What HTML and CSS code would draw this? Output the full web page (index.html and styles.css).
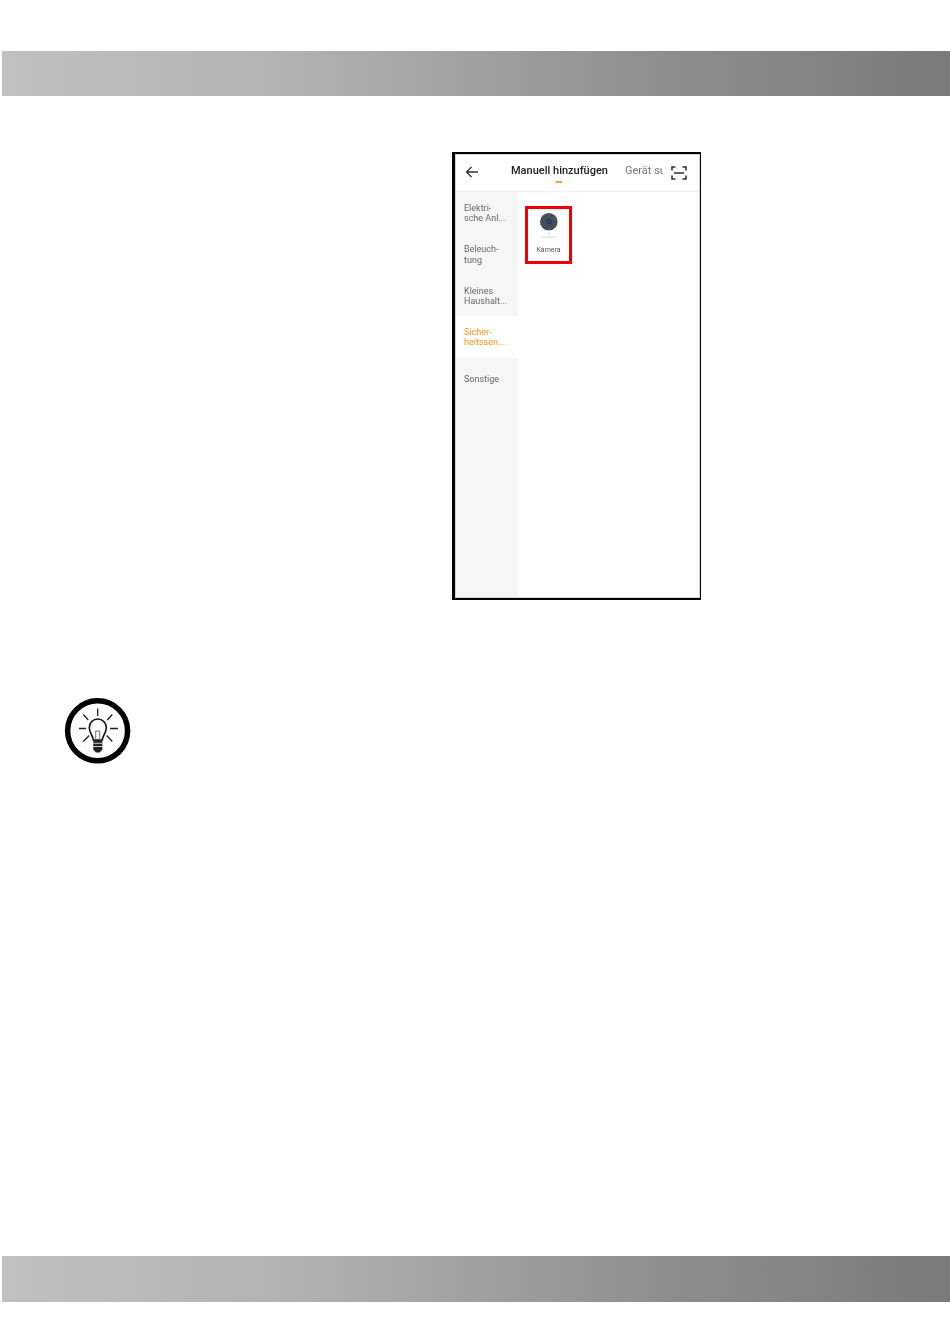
FILE: index.html
```html
<!DOCTYPE html>
<html lang="de">
<head>
<meta charset="utf-8">
<title>Manuell hinzufügen</title>
<link rel="stylesheet" href="styles.css">
</head>
<body>
<div class="page">
  <div class="band band-top"></div>
  <main class="content">
    <section class="phone">
      <header class="phone-head">
        <svg class="back" viewBox="0 0 14 12" width="14" height="12"><path d="M13 6H1.500M6.500 1 1.500 6l5 5" fill="none" stroke="#333" stroke-width="1.300"/></svg>
        <div class="tab-active">Manuell hinzufügen<span class="tab-mark"></span></div>
        <div class="tab-other">Gerät su</div>
        <svg class="scan" viewBox="0 0 16 14" width="16" height="14"><path d="M1 4.500V1h3.500M11.500 1H15v3.500M1 9.500V13h3.500M11.500 13H15V9.500M3 7h10" fill="none" stroke="#333" stroke-width="1.600"/></svg>
      </header>
      <div class="phone-body">
        <nav class="side">
          <div class="side-item">Elektri-<br>sche Anl...</div>
          <div class="side-item">Beleuch-<br>tung</div>
          <div class="side-item">Kleines<br>Haushalt...</div>
          <div class="side-item side-active">Sicher-<br>heitssen...</div>
          <div class="side-item side-single">Sonstige</div>
        </nav>
        <div class="grid">
          <div class="device">
            <svg class="cam" viewBox="0 0 24 30" width="24" height="30">
              <circle cx="11.800" cy="9.700" r="8.800" fill="#454f5c"/>
              <circle cx="11.800" cy="9.700" r="2.600" fill="#2a3340"/>
              <circle cx="11.800" cy="9.700" r="1.200" fill="#2c58b0"/>
              <path d="M11.800 18v6" stroke="#e6e6e6" stroke-width="1.300"/>
              <rect x="4.500" y="24.300" width="15" height="1.600" fill="#e8e8e8"/>
            </svg>
            <div class="device-name">Kamera</div>
          </div>
        </div>
      </div>
    </section>
    <div class="tip">
      <svg viewBox="0 0 68 68" width="68" height="68">
        <circle cx="33.600" cy="33.800" r="30" fill="#fff" stroke="#000" stroke-width="5.500"/>
        <path d="M33.700 11.500V19M19.300 17.500l5 5.500M48.300 17.500l-5 5.500M15 31.500h7M46 31.500h8M19.300 44.500l6-6M48.300 44.500l-5.600-6" stroke="#222" stroke-width="1.300" fill="none"/>
        <path d="M29.300 43c0-4.500-4-6-4-12.500a8.500 8.500 0 0 1 17 0c0 6.500-4 8-4 12.500z" fill="#fff" stroke="#111" stroke-width="1.600"/>
        <path d="M31.700 43v-9h4v9" fill="none" stroke="#555" stroke-width=".8"/>
        <path d="M29.300 43h9v9.500l-2.500 3h-4l-2.500-3z" fill="#222"/>
        <path d="M29.300 46.300h9M29.300 49.500h9" stroke="#ddd" stroke-width=".9"/>
      </svg>
    </div>
  </main>
  <div class="band band-bottom"></div>
</div>
</body>
</html>
```
FILE: styles.css
```css
html, body {
  margin: 0;
  padding: 0;
  background: #fff;
}

.page {
  width: 950px;
  height: 1343px;
  padding-top: 51px;
  box-sizing: border-box;
  display: flex;
  flex-direction: column;
  font-family: Roboto, "Liberation Sans", sans-serif;
  overflow: hidden;
}

.band {
  margin-left: 2px;
  width: 948px;
  flex: none;
  background: linear-gradient(90deg, #c0c0c0 0%, #b2b2b2 30%, #a0a0a0 50%, #8c8c8c 72%, #7a7a7a 100%);
}

.band-top {
  height: 45px;
}

.band-bottom {
  height: 46px;
}

.content {
  height: 1160px;
  flex: none;
  padding-top: 56px;
  box-sizing: border-box;
}

.phone {
  margin-left: 452px;
  width: 249px;
  height: 448px;
  box-sizing: border-box;
  border-style: solid;
  border-color: #000;
  border-width: 2px 1px 2px 3px;
  background: #fff;
  display: flex;
  flex-direction: column;
  position: relative;
}

.phone::after {
  content: "";
  position: absolute;
  inset: 0;
  border: 1px solid #d4d4d4;
  pointer-events: none;
}

.phone-head {
  height: 37px;
  flex: none;
  display: flex;
  align-items: center;
  border-bottom: 1px solid #f0f0f0;
  filter: blur(0.3px);
}

.back {
  margin-left: 10px;
  margin-top: -1px;
}

.tab-active {
  margin-left: 32px;
  font-size: 11px;
  font-weight: 500;
  color: #222;
  width: 114px;
  white-space: nowrap;
  position: relative;
  margin-top: -4px;
}

.tab-mark {
  position: absolute;
  left: 45px;
  top: 17px;
  width: 6px;
  height: 2px;
  background: #f0a030;
}

.tab-other {
  font-size: 11px;
  color: #777;
  width: 38px;
  overflow: hidden;
  white-space: nowrap;
  margin-top: -4px;
}

.scan {
  margin-left: 8px;
}

.phone-body {
  flex: 1;
  display: flex;
  min-height: 0;
}

.side {
  width: 63px;
  flex: none;
  background: #f6f6f6;
}

.side-item {
  height: 41.400px;
  padding: 11px 0 0 9px;
  box-sizing: border-box;
  font-size: 9px;
  line-height: 10.250px;
  color: #666;
  white-space: nowrap;
  filter: blur(0.3px);
}

.side-active {
  background: #fff;
  color: #f5921a;
}

.side-single {
  padding-top: 16px;
}

.grid {
  flex: 1;
  padding: 14px 0 0 7px;
}

.device {
  width: 47px;
  height: 58px;
  box-sizing: border-box;
  border: 3px solid #f00000;
  display: flex;
  flex-direction: column;
  align-items: center;
  padding-top: 3px;
}

.cam {
  flex: none;
}

.device-name {
  font-size: 7px;
  line-height: 8px;
  color: #555;
  margin-top: 4px;
  filter: blur(0.3px);
}

.tip {
  margin: 97px 0 0 64px;
  width: 68px;
  height: 68px;
}
```
